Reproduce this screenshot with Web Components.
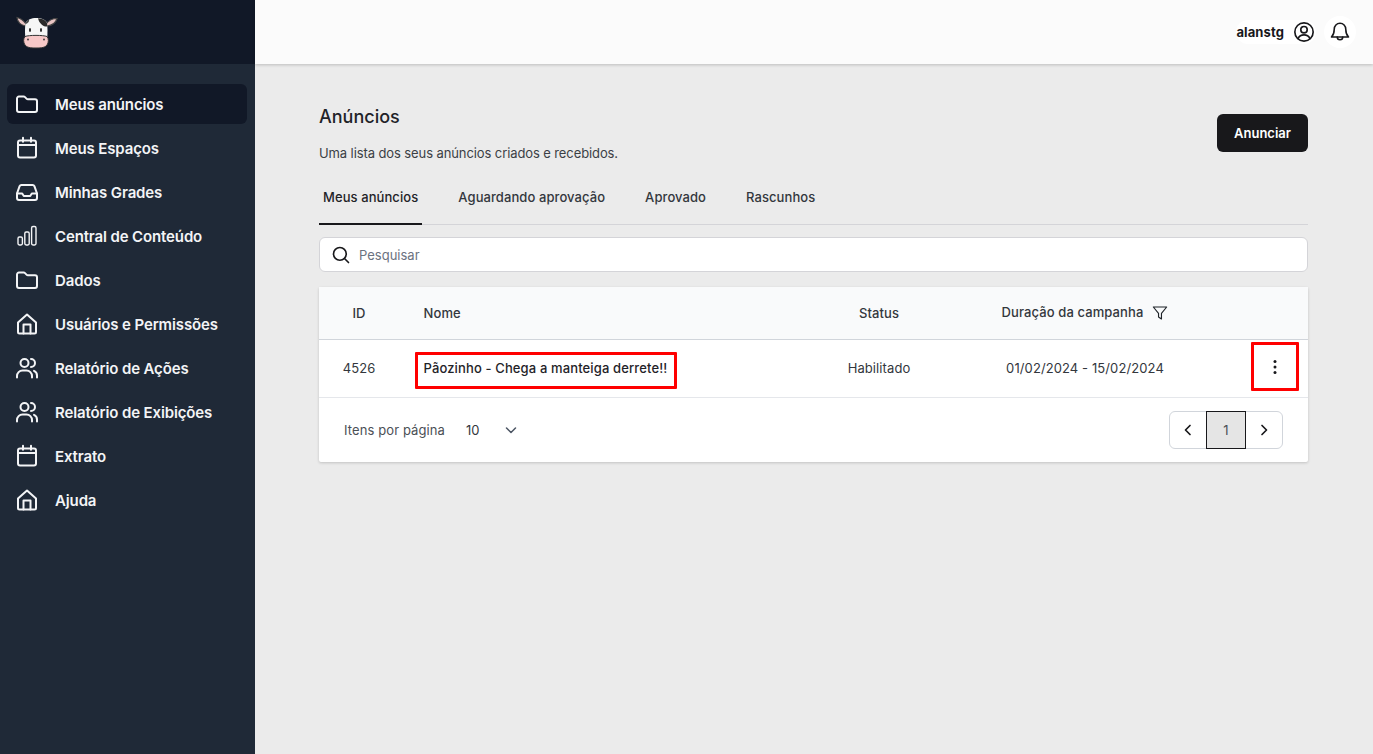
<!DOCTYPE html>
<html lang="pt-BR">
<head>
<meta charset="utf-8">
<title>Anúncios</title>
<style>
  html, body { margin: 0; height: 100%; }
  body { font-family: Inter, "Liberation Sans", sans-serif; color: #1f2328; background: #ebebeb; }
</style>
</head>
<body>
<app-shell>
  <side-nav slot="nav"></side-nav>
  <top-bar slot="top" user="alanstg"></top-bar>
  <page-head title="Anúncios" sub="Uma lista dos seus anúncios criados e recebidos."></page-head>
  <ad-tabs></ad-tabs>
  <search-box placeholder="Pesquisar"></search-box>
  <ads-table></ads-table>
</app-shell>

<script>
const ICONS = {
  folder: `<path d="M2 6.500A2 2 0 0 1 4 4.500h4.600a2 2 0 0 1 1.400.6l1.500 1.500a2 2 0 0 0 1.400.6H20a2 2 0 0 1 2 2V18a2 2 0 0 1-2 2H4a2 2 0 0 1-2-2z"/>`,
  calendar: `<rect x="3" y="4.500" width="18" height="17" rx="2"/><path d="M3 9h18M8 1.800v4M16 1.800v4"/>`,
  inbox: `<path d="M2 13.500 4.600 6.200A2 2 0 0 1 6.500 5h11a2 2 0 0 1 1.900 1.200L22 13.500V18a2 2 0 0 1-2 2H4a2 2 0 0 1-2-2z"/><path d="M2 13.500h5.200l1.600 2.500h6.400l1.600-2.500H22"/>`,
  chart: `<rect x="3" y="13" width="4.400" height="8" rx="1.400" stroke-width="1.400"/><rect x="9.800" y="8" width="4.400" height="13" rx="1.400" stroke-width="1.400"/><rect x="16.600" y="2.500" width="4.400" height="18.500" rx="1.400" stroke-width="1.400"/>`,
  home: `<path d="M3 10.500 12 2.500l9 8V20a1.500 1.500 0 0 1-1.500 1.500h-15A1.500 1.500 0 0 1 3 20z"/><path d="M8.500 21.500V12.500h7v9"/>`,
  users: `<circle cx="9.500" cy="7" r="4"/><path d="M2 21.500V20a5.500 5.500 0 0 1 5.500-5.500h4A5.500 5.500 0 0 1 17 20v1.500"/><path d="M16 3a4 4 0 0 1 0 8"/><path d="M19 14.800a5 5 0 0 1 3 4.700v2"/>`,
};

function icon(name, size = 24, sw = 2) {
  return `<svg width="${size}" height="${size}" viewBox="0 0 24 24" fill="none" stroke="currentColor" stroke-width="${sw}" stroke-linecap="round" stroke-linejoin="round">${ICONS[name]}</svg>`;
}

class AppShell extends HTMLElement {
  connectedCallback() {
    this.attachShadow({ mode: "open" });
    this.shadowRoot.innerHTML = `
      <style>
        :host { display: grid; grid-template-columns: 255px 1fr; min-height: 754px; height: 100vh; }
        .right { display: flex; flex-direction: column; min-width: 0; }
        main { padding: 41px 65px 0 64px; display: flex; flex-direction: column; }
      </style>
      <slot name="nav"></slot>
      <div class="right">
        <slot name="top"></slot>
        <main><slot></slot></main>
      </div>
    `;
  }
}

class SideNav extends HTMLElement {
  connectedCallback() {
    this.attachShadow({ mode: "open" });
    const items = [
      ["folder", "Meus anúncios", true],
      ["calendar", "Meus Espaços"],
      ["inbox", "Minhas Grades"],
      ["chart", "Central de Conteúdo"],
      ["folder", "Dados"],
      ["home", "Usuários e Permissões"],
      ["users", "Relatório de Ações"],
      ["users", "Relatório de Exibições"],
      ["calendar", "Extrato"],
      ["home", "Ajuda"],
    ];
    this.shadowRoot.innerHTML = `
      <style>
        :host { display: block; background: #1f2937; color: #f3f4f6; }
        .logo { height: 64px; background: #111827; padding: 16px 0 0 16px; box-sizing: border-box; }
        .logo svg { display: block; }
        nav { padding: 20px 8px 0 7px; display: flex; flex-direction: column; gap: 4px; }
        a { height: 40px; display: flex; align-items: center; gap: 16px; padding-left: 8px; border-radius: 6px;
            font-size: 15px; font-weight: 600; letter-spacing: -.13px; }
        a.on { background: #111827; }
        svg { flex: none; }
      </style>
      <div class="logo">
        <svg width="42" height="33" viewBox="0 0 42 33">
          <path d="M10 8C7 4 4 2 1 1.500c.5 4 3.500 7.500 8.500 8.500z" fill="#e9c4c4" stroke="#444" stroke-width="1.200"/>
          <path d="M30 8c3-4 6-5.500 11-5.500-1 3.500-4.500 7-10 7.500z" fill="#e9c4c4" stroke="#444" stroke-width="1.200"/>
          <path d="M9.500 7c2-3.500 5.500-5 11-5s9 1.500 10.500 5c.6 4 .6 9 .3 14H9.200C8.900 16 8.900 11 9.500 7z" fill="#f6f6f6"/>
          <path d="M22 2.200c4.500.2 7.500 1.800 9 4.800.2 1.300.3 2.500.4 3.600-3.600.3-8-2.600-9.400-8.400z" fill="#2a2a2a"/>
          <path d="M9.500 7c.8-1.500 2-2.700 3.500-3.500.5 1.500-.5 3.500-3.700 4.800z" fill="#444"/>
          <ellipse cx="14" cy="14" rx="1" ry="2" fill="#222"/>
          <ellipse cx="25" cy="14" rx="1" ry="2" fill="#222"/>
          <path d="M9 20.500c4-1.500 18-1.500 22 0 1.800 2 1.800 6 0 8.500-2 2.500-5 3-11 3s-9-.5-11-3c-1.800-2.500-1.800-6.500 0-8.500z" fill="#f7c8c8" stroke="#333" stroke-width="1"/>
          <circle cx="12" cy="23.500" r=".9" fill="#333"/>
          <circle cx="28" cy="23.500" r=".9" fill="#333"/>
        </svg>
      </div>
      <nav>
        ${items.map(([ic, label, on]) => `<a class="${on ? "on" : ""}">${icon(ic)}<span>${label}</span></a>`).join("")}
      </nav>
    `;
  }
}

class TopBar extends HTMLElement {
  connectedCallback() {
    this.attachShadow({ mode: "open" });
    this.shadowRoot.innerHTML = `
      <style>
        :host { display: flex; align-items: center; justify-content: flex-end; height: 64px; background: #fbfbfb;
                box-shadow: 0 1px 3px rgba(0,0,0,.2); padding-right: 17px; gap: 8px; box-sizing: border-box; }
        .user { display: flex; align-items: center; gap: 9px; background: #fff; border-radius: 12px; height: 24px;
                font-size: 13px; font-weight: 700; letter-spacing: .1px; color: #18181b; padding-right: 1px; }
        .bell { width: 32px; height: 32px; border-radius: 50%; background: #fff; display: grid; place-items: center; color: #18181b; }
        .user svg { display: block; }
      </style>
      <div class="user">
        <span>${this.getAttribute("user")}</span>
        <svg width="22" height="22" viewBox="0 0 24 24" fill="none" stroke="#18181b" stroke-width="1.800" stroke-linecap="round">
          <circle cx="12" cy="12" r="10"/><circle cx="12" cy="9.500" r="3.500"/><path d="M5.500 19.200c1.300-2.700 3.800-4 6.500-4s5.200 1.300 6.500 4"/>
        </svg>
      </div>
      <div class="bell">
        <svg width="22" height="22" viewBox="0 0 24 24" fill="none" stroke="currentColor" stroke-width="1.700" stroke-linecap="round" stroke-linejoin="round">
          <path d="M12 2.500c-3.600 0-6.300 2.800-6.300 6.500 0 4.500-1 6.500-3 8.500h18.600c-2-2-3-4-3-8.500 0-3.700-2.700-6.500-6.300-6.500z"/>
          <path d="M9 17.500a3 3 0 0 0 6 0"/>
        </svg>
      </div>
    `;
  }
}

class PageHead extends HTMLElement {
  connectedCallback() {
    this.attachShadow({ mode: "open" });
    this.shadowRoot.innerHTML = `
      <style>
        :host { display: flex; justify-content: space-between; align-items: flex-start; }
        h1 { margin: 0; font-size: 18px; line-height: 24px; font-weight: 500; color: #1f2328; }
        p { margin: 15px 0 0; font-size: 13px; line-height: 18px; color: #3b3f45; letter-spacing: -.1px; }
        button { font: 600 13px Inter, sans-serif; color: #fff; background: #18181b; border: 0; border-radius: 6px;
                 width: 91px; height: 38px; margin-top: 9px; }
      </style>
      <div>
        <h1>${this.getAttribute("title")}</h1>
        <p>${this.getAttribute("sub")}</p>
      </div>
      <button>Anunciar</button>
    `;
  }
}

class AdTabs extends HTMLElement {
  connectedCallback() {
    this.attachShadow({ mode: "open" });
    const tabs = ["Meus anúncios", "Aguardando aprovação", "Aprovado", "Rascunhos"];
    this.shadowRoot.innerHTML = `
      <style>
        :host { display: flex; margin-top: 15px; border-bottom: 1px solid #d4d4d8; }
        a { display: block; height: 47px; line-height: 40px; padding: 0 4px; margin-right: 32px; margin-bottom: -1px;
            font-size: 13px; font-weight: 500; color: #33373d; letter-spacing: .08px; }
        a.on { border-bottom: 2px solid #18181b; color: #1f2328; height: 46px; }
      </style>
      ${tabs.map((t, i) => `<a class="${i === 0 ? "on" : ""}">${t}</a>`).join("")}
    `;
  }
}

class SearchBox extends HTMLElement {
  connectedCallback() {
    this.attachShadow({ mode: "open" });
    this.shadowRoot.innerHTML = `
      <style>
        :host { display: flex; align-items: center; gap: 9px; margin-top: 12px; height: 35px; box-sizing: border-box;
                background: #fff; border: 1px solid #d4d4d8; border-radius: 6px; padding-left: 12px; }
        span { font-size: 13px; color: #6b7280; }
        svg { display: block; }
      </style>
      <svg width="18" height="18" viewBox="0 0 24 24" fill="none" stroke="#18181b" stroke-width="2.200" stroke-linecap="round">
        <circle cx="10.500" cy="10.500" r="8.500"/><path d="M17 17l5 5"/>
      </svg>
      <span>${this.getAttribute("placeholder")}</span>
    `;
  }
}

class AdsTable extends HTMLElement {
  connectedCallback() {
    this.attachShadow({ mode: "open" });
    this.shadowRoot.innerHTML = `
      <style>
        :host { display: block; margin-top: 15px; background: #fff; box-shadow: 0 1px 3px rgba(0,0,0,.18);
                border-radius: 2px; font-size: 13px; color: #33373d; letter-spacing: .1px; }
        .row { display: grid; grid-template-columns: 80px 400px 160px 252px 1fr; align-items: center; }
        .row > div { display: flex; align-items: center; }
        .head { height: 53px; background: #f9fafb; border-bottom: 1px solid #d1d5db; box-sizing: border-box; font-weight: 500; color: #33373d; }
        .body { height: 58px; border-bottom: 1px solid #e5e7eb; box-sizing: border-box; }
        .body > div:not(.more) { padding-bottom: 2px; }
        .c { justify-content: center; }
        .name { padding-left: 24.500px; }
        .dur { padding-bottom: 3px; gap: 9px; }
        .mark { position: relative; }
        .mark::after { content: ""; position: absolute; border: 3px solid #f00; border-radius: 1px; box-sizing: border-box; }
        .mark.title { color: #1f2328; font-weight: 500; letter-spacing: .13px; }
        .mark.title::after { left: -9px; right: -10px; top: -8px; bottom: -13px; }
        .more { justify-content: flex-end; padding-right: 9px; }
        .kebab { width: 48px; height: 49px; box-sizing: border-box; border: 3px solid #f00; border-radius: 1px;
                 display: grid; place-items: center; margin-top: -4px; padding-right: 1px; }
        .foot { display: flex; align-items: center; height: 64px; padding: 0 25px; color: #4b5056; }
        .foot .size { margin-left: 21px; color: #33373d; }
        .foot .chev { margin-left: 25px; color: #4b5563; display: block; }
        .spacer { flex: 1; }
        svg { display: block; }
      </style>
      <div class="row head">
        <div class="c">ID</div>
        <div class="name">Nome</div>
        <div class="c">Status</div>
        <div class="c dur">Duração da campanha
          <svg width="16" height="16" viewBox="0 0 24 24" fill="none" stroke="#1f2328" stroke-width="1.700" stroke-linejoin="round" style="margin-top:3px">
            <path d="M2 3h20l-7.800 9.500V21l-4.400-3v-5.500z"/>
          </svg>
        </div>
        <div></div>
      </div>
      <div class="row body">
        <div class="c">4526</div>
        <div class="name"><span class="mark title">Pãozinho - Chega a manteiga derrete!!</span></div>
        <div class="c">Habilitado</div>
        <div class="c">01/02/2024 - 15/02/2024</div>
        <div class="more">
          <div class="kebab">
            <svg width="4" height="16" viewBox="0 0 4 16" fill="#18181b"><circle cx="2" cy="2.500" r="1.500"/><circle cx="2" cy="8" r="1.500"/><circle cx="2" cy="13.500" r="1.500"/></svg>
          </div>
        </div>
      </div>
      <div class="foot">
        <span>Itens por página</span>
        <span class="size">10</span>
        <svg class="chev" width="12" height="12" viewBox="0 0 12 12" fill="none" stroke="currentColor" stroke-width="1.500" stroke-linecap="round" stroke-linejoin="round"><path d="M1.500 4 6 8.500 10.500 4"/></svg>
        <span class="spacer"></span>
        <page-nav current="1"></page-nav>
      </div>
    `;
  }
}

class PageNav extends HTMLElement {
  connectedCallback() {
    this.attachShadow({ mode: "open" });
    this.shadowRoot.innerHTML = `
      <style>
        :host { display: flex; height: 38px; box-sizing: border-box; border: 1px solid #d1d5db; border-radius: 6px; font-size: 13px; color: #4b5056; }
        div { width: 36px; display: grid; place-items: center; color: #18181b; }
        .cur { width: 40px; height: 38px; margin-top: -1px; box-sizing: border-box; border: 1px solid #18181b; background: #e5e5e5; color: #4b5056; }
        svg { display: block; }
      </style>
      <div><svg width="12" height="12" viewBox="0 0 12 12" fill="none" stroke="currentColor" stroke-width="1.700" stroke-linecap="round" stroke-linejoin="round"><path d="M8 1.500 3.500 6 8 10.500"/></svg></div>
      <div class="cur">${this.getAttribute("current")}</div>
      <div><svg width="12" height="12" viewBox="0 0 12 12" fill="none" stroke="currentColor" stroke-width="1.700" stroke-linecap="round" stroke-linejoin="round"><path d="M4 1.500 8.500 6 4 10.500"/></svg></div>
    `;
  }
}

customElements.define("app-shell", AppShell);
customElements.define("side-nav", SideNav);
customElements.define("top-bar", TopBar);
customElements.define("page-head", PageHead);
customElements.define("ad-tabs", AdTabs);
customElements.define("search-box", SearchBox);
customElements.define("ads-table", AdsTable);
customElements.define("page-nav", PageNav);
</script>
</body>
</html>
